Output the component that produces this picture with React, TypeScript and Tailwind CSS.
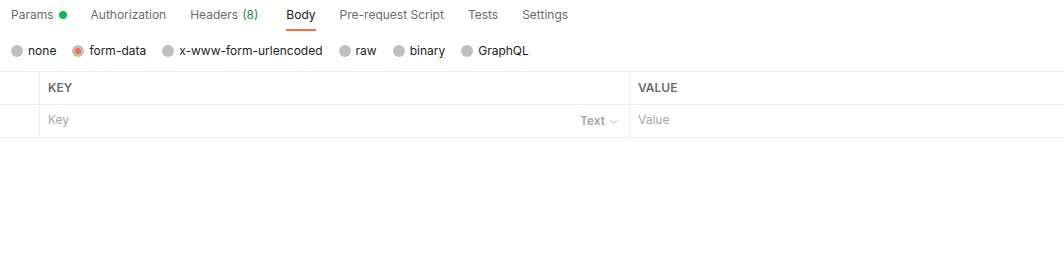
import React, { useState } from 'react';

// Tabs shown above the request body editor
const tabs = ['Params', 'Authorization', 'Headers', 'Body', 'Pre-request Script', 'Tests', 'Settings'];

const bodyTypes = ['none', 'form-data', 'x-www-form-urlencoded', 'raw', 'binary', 'GraphQL'];

const App: React.FC = () => {
  const [activeTab, setActiveTab] = useState('Body');
  const [bodyType, setBodyType] = useState('form-data');

  return (
    <div className="w-[1063px] h-[255px] bg-white text-[12px] font-['Inter',sans-serif] antialiased">
      {/* Tab bar */}
      <div className="flex gap-6 px-[11px] h-[31px]">
        {tabs.map((tab) => (
          <button
            key={tab}
            onClick={() => setActiveTab(tab)}
            className={`relative flex items-center h-full pb-[2px] ${tab === 'Headers' ? 'mr-1' : ''} ${activeTab === tab ? 'text-[#212121]' : 'text-[#6b6b6b]'}`}
          >
            {tab}
            {tab === 'Params' && <span className="ml-[5px] w-2 h-2 rounded-full bg-[#0cbb52]" />}
            {tab === 'Headers' && <span className="ml-1 text-[#20894f]">(8)</span>}
            {activeTab === tab && <span className="absolute left-0 right-0 bottom-0 h-[2px] bg-[#ff6c37]" />}
          </button>
        ))}
      </div>

      {/* Body type radios */}
      <div className="flex items-center gap-4 px-[11px] h-[40px]">
        {bodyTypes.map((type) => (
          <label key={type} className="flex items-center gap-[5px] text-[#212121] cursor-pointer" onClick={() => setBodyType(type)}>
            <span className="w-3 h-3 rounded-full bg-[#c0c0c0] flex items-center justify-center">
              {bodyType === type && <span className="w-[6px] h-[6px] rounded-full bg-[#ff6c37]" />}
            </span>
            {type}
          </label>
        ))}
      </div>

      {/* Key / value table */}
      <div className="border-t border-[#ededed]">
        <div className="flex h-[33px] border-b border-[#ededed]">
          <div className="w-[40px] border-r border-[#ededed]" />
          <div className="w-[590px] border-r border-[#ededed] flex items-center px-2 text-xs font-semibold text-[#6b6b6b]">KEY</div>
          <div className="flex-1 flex items-center px-2 text-xs font-semibold text-[#6b6b6b]">VALUE</div>
        </div>
        <div className="flex h-[33px] border-b border-[#ededed]">
          <div className="w-[40px] border-r border-[#ededed]" />
          <div className="w-[590px] border-r border-[#ededed] flex items-center justify-between px-2 pb-[2px] text-[#a6a6a6]">
            <span>Key</span>
            <span className="flex items-center gap-1 pr-[3px] pt-[2px] font-semibold">
              Text
              <svg width="9" height="9" viewBox="0 0 10 10" fill="none" stroke="currentColor" strokeWidth="1">
                <path d="M1.5 3.5 5 7l3.5-3.5" />
              </svg>
            </span>
          </div>
          <div className="flex-1 flex items-center px-2 pb-[2px] text-[#a6a6a6]">Value</div>
        </div>
      </div>
    </div>
  );
};

export default App;
